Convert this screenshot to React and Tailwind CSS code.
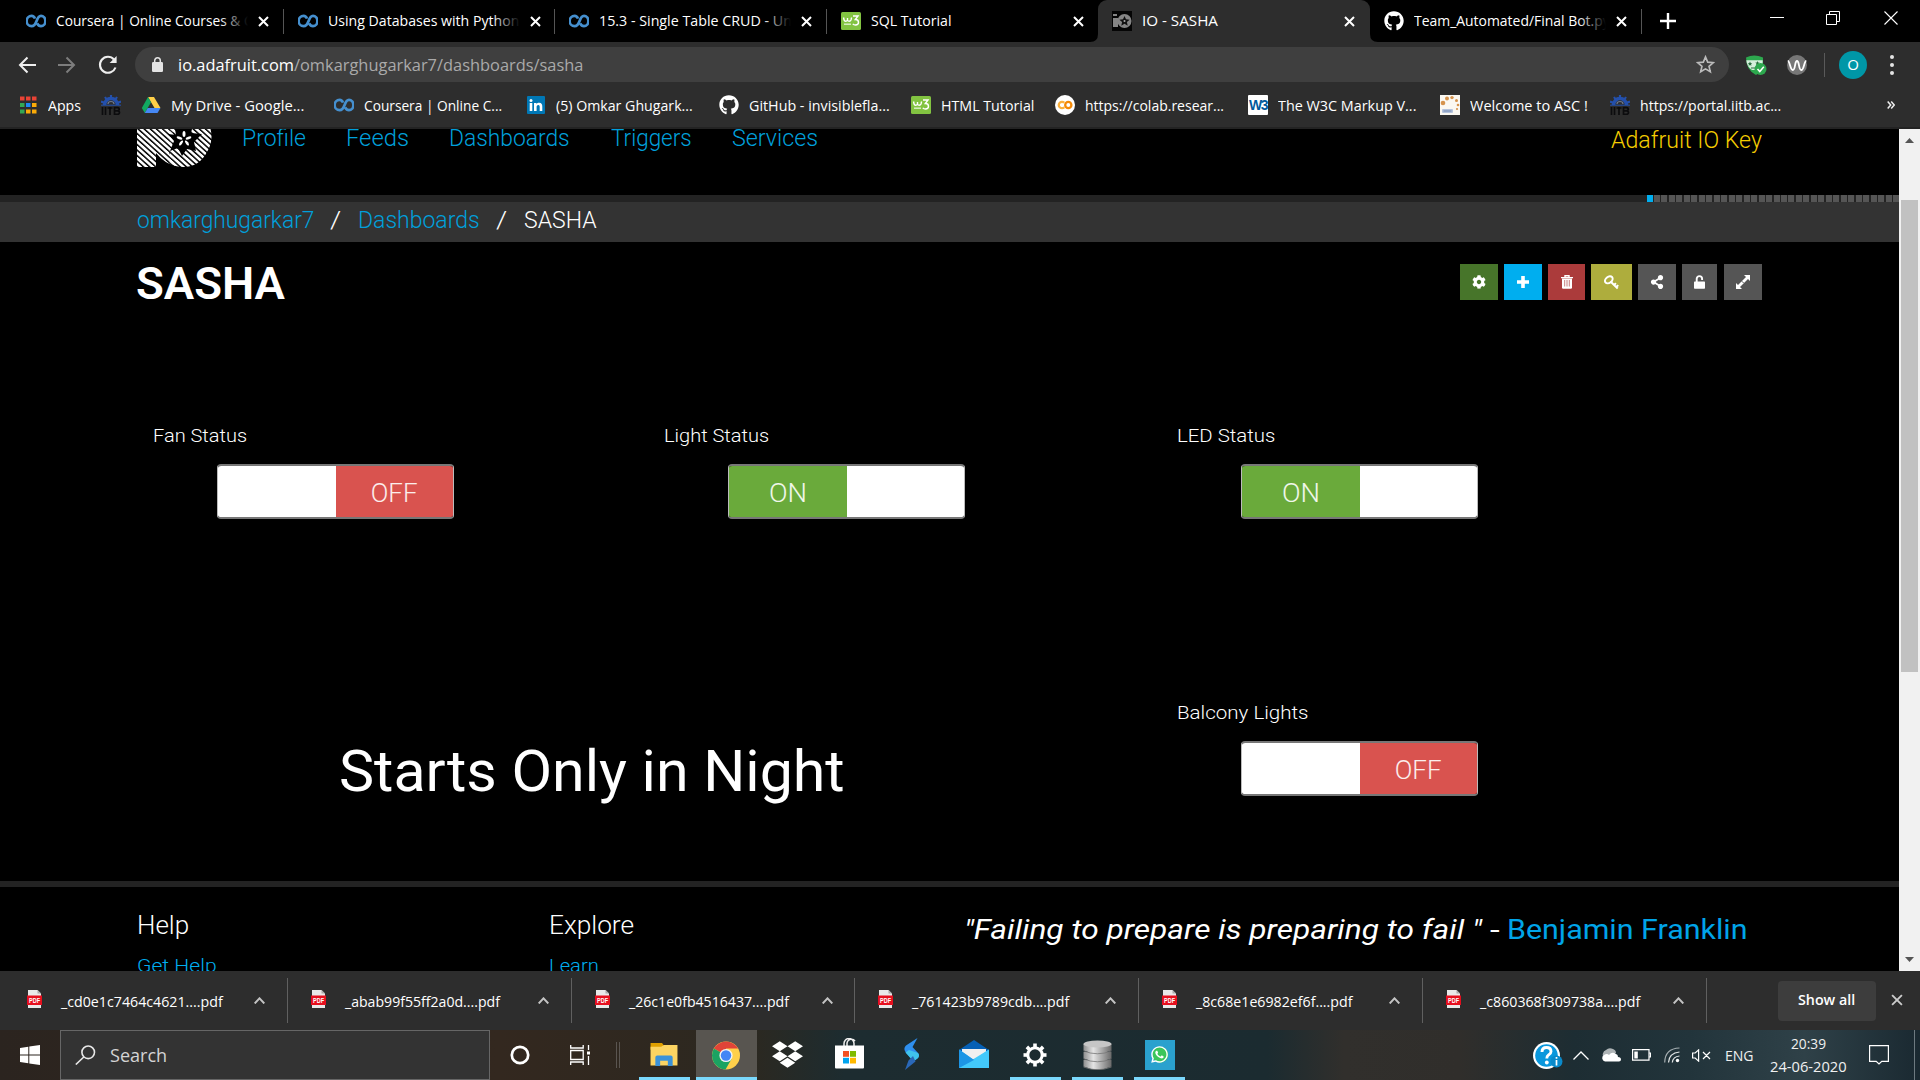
import React, { useLayoutEffect, useRef, useState } from "react";
import { FaGithub, FaDropbox, FaWhatsapp, FaCog, FaShareAlt } from "react-icons/fa";

const UI = "font-['Open_Sans','Noto_Sans',sans-serif]";
const PAGE = "font-['Roboto','Liberation_Sans',sans-serif]";

/* One line of text, stretched horizontally to the width w. */
function Fit({ w, className = "", children }) {
  const ref = useRef(null);
  const [s, setS] = useState(1);
  useLayoutEffect(() => {
    const measure = () => {
      if (ref.current && ref.current.offsetWidth) setS(w / ref.current.offsetWidth);
    };
    measure();
    if (document.fonts) document.fonts.ready.then(measure);
  }, [w]);
  return (
    <span className={"block shrink-0 whitespace-nowrap " + className} style={{ width: w }}>
      <span ref={ref} className="inline-block origin-left" style={{ transform: `scaleX(${s})` }}>{children}</span>
    </span>
  );
}

const Coursera = () => (
  <svg width="20" height="14" viewBox="0 0 20 14" fill="none" stroke="#458fce" strokeWidth="2.700">
    <path d="M9 4.600C8.300 2.700 7 1.800 5.600 1.800a5 5.200 0 0 0 0 10.400c3 0 4-2.200 5-5.200s2-5.200 4.400-5.200a4.400 5.200 0 0 1 0 10.400c-1.700 0-3-1-3.900-2.800" />
  </svg>
);
const W3Green = () => (
  <svg width="20" height="18" viewBox="0 0 20 18">
    <rect width="20" height="18" rx="1.500" fill="#82c341" />
    <path d="M2.500 5.500l.6 2.500q.3 1.200 1.500 1.200T6.500 8V6M6.500 8q.2 1.200 1.600 1.200T10 8l.6-2.500M12 4h5l-2.700 3.500q3.200 0 3.200 2.700T14.500 13q-1.800 0-2.700-1.200" fill="none" stroke="#fff" strokeWidth="1.400" />
    <path d="M3 12.200h7" stroke="#d9efc3" strokeWidth="1.500" />
  </svg>
);
const Iitb = () => (
  <svg width="20" height="20" viewBox="0 0 20 20">
    <path d="M3.500 10a6.500 6.500 0 0 1 13 0" fill="none" stroke="#2450ac" strokeWidth="3.600" />
    <path d="M10 0v4M4 2l2 3M16 2l-2 3M0 6.500l4 1.500M20 6.500L16 8" stroke="#2450ac" strokeWidth="2.200" />
    <path d="M0 10.200h20" stroke="#2450ac" strokeWidth="1" />
    <path d="M7 9a3 2.500 0 0 1 6 0" fill="none" stroke="#6b7890" strokeWidth="1.200" />
    <path d="M1.500 12v8M4.500 12v8M6.500 13h5M9 12v8M13.500 12.700v6.600h3q2 0 2-1.700t-2-1.700h-3 3q1.700 0 1.700-1.600t-1.700-1.600z" fill="none" stroke="#0c0c0e" strokeWidth="1.700" />
  </svg>
);
const Drive = () => (
  <svg width="20" height="18" viewBox="0 0 20 18">
    <path d="M7 1h6l6.500 11h-6z" fill="#ffcf48" />
    <path d="M7 1l3 5.200L3.800 17 .8 12z" fill="#11a861" />
    <path d="M6.700 12h12.800l-3 5H3.800z" fill="#4688f4" />
  </svg>
);
const LinkedIn = () => (
  <svg width="20" height="18" viewBox="0 0 20 18">
    <rect x="1" width="18" height="18" rx="1" fill="#0077b5" />
    <path d="M3.700 7h2.600v8H3.700zM8 7h2.500v1.200C11 7.300 12 6.800 13.200 6.800c2.500 0 3.100 1.700 3.100 3.900V15h-2.600v-3.900c0-1-.1-2-1.400-2-1.300 0-1.700 1-1.700 2V15H8z" fill="#fff" />
    <circle cx="5" cy="4.500" r="1.500" fill="#fff" />
  </svg>
);
const Github = () => (
  <span className="flex size-5 items-center justify-center text-white"><FaGithub size={20} /></span>
);
const Colab = () => (
  <svg width="20" height="20" viewBox="0 0 20 20">
    <circle cx="10" cy="10" r="10" fill="#fff" />
    <g fill="none" strokeWidth="2.300">
      <path d="M9.300 7.800A3.200 3.200 0 1 0 9.300 12.200" stroke="#fbb03b" />
      <circle cx="13.300" cy="10" r="3.100" stroke="#f58a07" />
    </g>
  </svg>
);
const W3C = () => (
  <span className="flex h-5 w-5 items-center justify-center rounded-[1px] bg-white font-['Liberation_Sans',sans-serif] text-[14px] font-bold tracking-[-1.5px] text-[#005a9c]">W3</span>
);
const Asc = () => (
  <svg width="20" height="20" viewBox="0 0 20 20">
    <rect width="20" height="20" fill="#fbf8f1" />
    <g fill="#d6934c">
      <circle cx="3" cy="8" r="2.300" /><circle cx="7" cy="3.500" r="2" /><circle cx="12" cy="2.600" r="1.700" />
      <circle cx="16.500" cy="5.500" r="1.500" /><circle cx="18" cy="10" r="1.300" /><circle cx="17" cy="14" r="1.100" />
    </g>
    <rect x="2" y="14" width="11" height="4" rx="1" fill="#b6c4dc" />
    <path d="M3.500 16h8" stroke="#6f86b2" />
  </svg>
);
const IoFav = () => (
  <svg width="20" height="20" viewBox="0 0 20 20">
    <rect width="20" height="20" fill="#050505" />
    <path d="M1 3h4v2H1zM1 7h5v9H1z" fill="#858585" />
    <circle cx="12.500" cy="10" r="7" fill="#858585" />
    <path d="M12.500 5l1.500 3.300 3.600.4-2.700 2.400.8 3.600-3.200-1.900-3.200 1.900.8-3.600-2.700-2.400 3.600-.4z" fill="#111" />
    <circle cx="12.500" cy="10" r="1" fill="#aaa" />
  </svg>
);
const AppsIcon = () => (
  <svg width="20" height="18" viewBox="0 0 20 18">
    {["#ea4335", "#ea4335", "#ea4335", "#34a853", "#1e88f5", "#fbab08", "#34a853", "#fbab08", "#fbab08"].map((c, i) => (
      <rect key={i} x={2 + (i % 3) * 6} y={Math.floor(i / 3) * 6.500 + 0.5} width="4.500" height="4" fill={c} />
    ))}
  </svg>
);
const Cross = ({ size = 11, color = "#fff", sw = 2 }) => (
  <svg width={size} height={size} viewBox="0 0 11 11"><path d="M1 1l9 9M10 1l-9 9" stroke={color} strokeWidth={sw} /></svg>
);

const tabs = [
  { icon: <Coursera />, text: "Coursera | Online Courses & C", w: 197, sep: true },
  { icon: <Coursera />, text: "Using Databases with Python", w: 191, sep: true },
  { icon: <Coursera />, text: "15.3 - Single Table CRUD - Un", w: 193, sep: true },
  { icon: <W3Green />, text: "SQL Tutorial", w: 81 },
  { icon: <IoFav />, text: "IO - SASHA", w: 76, active: true },
  { icon: <Github />, text: "Team_Automated/Final Bot.py", w: 196, sep: true },
];

function Tab({ t }) {
  return (
    <div className={"relative flex h-[42px] w-[271.6px] shrink-0 items-center pl-[14px] " + (t.active ? "z-10 rounded-t-[9px] bg-[#2d2d2d]" : "")}>
      {t.active && (
        <>
          <svg className="absolute -left-2 bottom-0" width="8" height="8"><path d="M8 0v8H0q8 0 8-8" fill="#2d2d2d" /></svg>
          <svg className="absolute -right-2 bottom-0" width="8" height="8"><path d="M0 0v8h8q-8 0-8-8" fill="#2d2d2d" /></svg>
        </>
      )}
      <span className="flex w-5 justify-center">{t.icon}</span>
      <div className="relative -mt-[2px] ml-[10px] h-6 w-[192px] overflow-hidden">
        <Fit w={t.w} className="text-[15px] leading-[24px] text-white">{t.text}</Fit>
        {t.w > 185 && <div className="absolute top-0 right-0 h-6 w-7 bg-gradient-to-r from-transparent to-black" />}
      </div>
      <span className="ml-[10px]"><Cross /></span>
      {t.sep && <span className="absolute right-0 top-[9px] h-[25px] w-px bg-[#555]" />}
    </div>
  );
}

const bookmarks = [
  { icon: <AppsIcon />, text: "Apps", w: 33, slot: "w-[83px]" },
  { icon: <Iitb />, slot: "w-[40px]" },
  { icon: <Drive />, text: "My Drive - Google...", w: 133, slot: "w-[193px]" },
  { icon: <Coursera />, text: "Coursera | Online C...", w: 138, slot: "w-[192px]" },
  { icon: <LinkedIn />, text: "(5) Omkar Ghugark...", w: 137, slot: "w-[193px]" },
  { icon: <Github />, text: "GitHub - invisiblefla...", w: 141, slot: "w-[192px]" },
  { icon: <W3Green />, text: "HTML Tutorial", w: 93, slot: "w-[144px]" },
  { icon: <Colab />, text: "https://colab.resear...", w: 139, slot: "w-[193px]" },
  { icon: <W3C />, text: "The W3C Markup V...", w: 138, slot: "w-[192px]" },
  { icon: <Asc />, text: "Welcome to ASC !", w: 118, slot: "w-[170px]" },
  { icon: <Iitb />, text: "https://portal.iitb.ac...", w: 141, slot: "w-[200px]" },
];

function BrowserChrome() {
  return (
    <header className={UI}>
      <div className="flex h-[42px] items-center bg-black pl-[12px]">
        {tabs.map((t) => <Tab key={t.text} t={t} />)}
        <svg className="ml-[18px]" width="16" height="16" viewBox="0 0 16 16"><path d="M8 0v16M0 8h16" stroke="#fff" strokeWidth="2.400" /></svg>
        <div className="ml-auto flex h-full items-start pt-[11px] pr-[22px]">
          <svg width="14" height="14"><path d="M0 6.500h14" stroke="#fff" /></svg>
          <svg className="ml-[42px]" width="14" height="14" fill="none" stroke="#fff"><path d="M.5 3.500h10v10H.5zM3.500 3.500v-3h10v10h-3" /></svg>
          <svg className="ml-[44px]" width="14" height="14"><path d="M.5.500l13 13M13.500.500l-13 13" stroke="#fff" strokeWidth="1.100" /></svg>
        </div>
      </div>
      <div className="flex h-[45px] items-center bg-[#2d2d2d] pl-[18px]">
        <svg width="18" height="18" fill="none" stroke="#eee" strokeWidth="2"><path d="M18 9H2M9.500 1.500L2 9l7.500 7.500" /></svg>
        <svg className="ml-[22px]" width="18" height="18" fill="none" stroke="#7d7d7d" strokeWidth="2"><path d="M0 9h16M8.500 1.500L16 9l-7.500 7.500" /></svg>
        <svg className="ml-[22px]" width="20" height="20" viewBox="0 0 20 20" fill="none" stroke="#eee" strokeWidth="2.100"><path d="M17.500 12.500A8 8 0 1 1 16 4.500" /><path d="M18.600 1v7h-7z" fill="#eee" stroke="none" /></svg>
        <div className="ml-[17px] flex h-[35px] w-[1594px] items-center rounded-full bg-[#3f3f3f] pr-[14px] pl-[17px]">
          <svg width="11" height="15" viewBox="0 0 11 15"><rect y="5" width="11" height="10" rx="1.200" fill="#e4e4e4" /><path d="M2.700 6V3.600a2.800 2.800 0 0 1 5.600 0V6" fill="none" stroke="#e4e4e4" strokeWidth="1.500" /></svg>
          <Fit w={405} className="ml-[15px] text-[17px] text-[#aaa]"><span className="text-white">io.adafruit.com</span>/omkarghugarkar7/dashboards/sasha</Fit>
          <svg className="ml-auto" width="19" height="19" viewBox="0 0 20 20"><path d="M10 2l2.300 5.500 6 .5-4.600 3.900 1.400 5.800L10 14.600l-5.100 3.100 1.400-5.800L1.700 8l6-.5z" fill="none" stroke="#bbb" strokeWidth="1.700" /></svg>
        </div>
        <svg className="ml-[17px]" width="21" height="20" viewBox="0 0 21 20">
          <path d="M0 2.500Q8-1.500 17 2.500V9q0 7-7 11Q0 15 0 2.500z" fill="#2da84e" />
          <path d="M.3 5.200h16.400q0 5-2 7L10 15H6Q1 12 .3 5.200z" fill="#d5efdc" />
          <path d="M4 6.500l.7 1.400 1.500.2-1.100 1 .3 1.600L4 10l-1.400.7.3-1.600-1.100-1 1.500-.2zM11.500 6l.7 1.400 1.500.2-1.100 1 .3 1.600-1.400-.7-1.400.7.3-1.600-1.100-1 1.500-.2zM5 12.500h4v1H5z" fill="#2a6f3e" />
          <circle cx="14.500" cy="14" r="6" fill="#2da84e" />
          <path d="M11.500 14l2.300 2.500 4-4.800" fill="none" stroke="#fff" strokeWidth="1.500" />
        </svg>
        <svg className="ml-[20px]" width="20" height="20" viewBox="0 0 20 20">
          <circle cx="10" cy="10" r="10" fill="#777" />
          <path d="M.8 6C3 6 3 15 5.800 15S7.500 6 10 6s1.500 9 4.300 9S17 6 19.300 6" fill="none" stroke="#fff" strokeWidth="1.800" />
        </svg>
        <span className="ml-[17px] h-[24px] w-px bg-[#5a5a5a]" />
        <span className="ml-[14px] flex size-7 items-center justify-center rounded-full bg-[#0097a7] text-[15px] text-white">O</span>
        <span className="ml-[23px] flex flex-col gap-1">
          {[0, 1, 2].map((i) => <span key={i} className="size-1 rounded-full bg-[#e4e4e4]" />)}
        </span>
      </div>
      <div className="flex h-[42px] items-center border-b-2 border-[#232323] bg-[#2d2d2d] pb-[4px] pl-[18px]">
        {bookmarks.map((b, i) => (
          <div key={i} className={"flex shrink-0 items-center " + b.slot}>
            <span className="flex w-5 shrink-0 justify-center">{b.icon}</span>
            {b.text && <Fit w={b.w} className="-mt-px ml-[10px] text-[15px] leading-[20px] text-white">{b.text}</Fit>}
          </div>
        ))}
        <svg className="ml-auto mr-[25px]" width="8" height="8" fill="none" stroke="#eee" strokeWidth="1.500"><path d="M.7.500L3.700 4 .7 7.500M4.200.500L7.200 4 4.200 7.500" /></svg>
      </div>
    </header>
  );
}

function IoLogo() {
  return (
    <svg width="75" height="38" viewBox="0 0 75 38" className="shrink-0">
      <defs>
        <pattern id="stripes" width="4.100" height="4.100" patternUnits="userSpaceOnUse" patternTransform="rotate(42)">
          <rect width="4.100" height="2.600" fill="#fff" />
        </pattern>
      </defs>
      <path d="M0 0h36v12l-4 12L39 37Q28 35 19 24V38H0z" fill="url(#stripes)" />
      <path d="M33 0h40.500q3 12-3 22-8 16-24 16-9 0-14-4z" fill="url(#stripes)" />
      <path d="M38 0h17l-1 4 11 1-8 8 2 9-9-2-5 7-4-8-8 3 4-10-6-7 8 1z" fill="#000" />
      <g fill="#fff">
        <ellipse cx="47" cy="5" rx="1.500" ry="3" /><ellipse cx="51.500" cy="9" rx="3" ry="1.300" transform="rotate(-18 51.500 9)" />
        <ellipse cx="50" cy="14" rx="1.300" ry="3" transform="rotate(-36 50 14)" /><ellipse cx="44" cy="14" rx="1.300" ry="3" transform="rotate(36 44 14)" />
        <ellipse cx="42.500" cy="9" rx="3" ry="1.300" transform="rotate(18 42.500 9)" />
      </g>
    </svg>
  );
}

const PlusIcon = () => (
  <svg width="12" height="12"><path d="M6 0v12M0 6h12" stroke="#fff" strokeWidth="3.600" /></svg>
);
const TrashIcon = () => (
  <svg width="12" height="14" viewBox="0 0 12 14"><path d="M4 2V.7h4V2M0 2.600h12" fill="none" stroke="#fff" strokeWidth="1.400" /><path d="M1 3.500h10V12.500q0 1.200-1.200 1.200H2.200Q1 13.700 1 12.500z" fill="#fff" /><path d="M3.700 5v6.500M6 5v6.500M8.300 5v6.500" stroke="#c77e7e" /></svg>
);
const KeyIcon = () => (
  <svg width="15" height="15" viewBox="0 0 15 15" fill="none" stroke="#fff"><ellipse cx="4.800" cy="4.800" rx="4.200" ry="3" transform="rotate(-38 4.800 4.800)" strokeWidth="2" /><path d="M6.500 6.500l7.200 7M10.200 10l1.700-1.900M12.300 12l1.900-1.900" strokeWidth="2" /></svg>
);
const UnlockIcon = () => (
  <svg width="11" height="14" viewBox="0 0 11 14"><rect y="6.500" width="11" height="7.300" rx=".7" fill="#fff" /><path d="M2.700 7V3.800a2.700 2.700 0 0 1 5.400 0V5" fill="none" stroke="#fff" strokeWidth="1.900" /></svg>
);
const ExpandIcon = () => (
  <svg width="14" height="14" viewBox="0 0 14 14"><path d="M8 0h6v6l-2-2-8 8 2 2H0V8l2 2 8-8z" fill="#fff" /><path d="M5.800 6.200l2 2" stroke="#555" /></svg>
);
const actions = [
  { cls: "w-[38px] bg-[#47752a]", icon: <FaCog size={14} /> },
  { cls: "w-[38px] bg-[#00aeef]", icon: <PlusIcon /> },
  { cls: "w-[37px] bg-[#ab3b3b]", icon: <TrashIcon /> },
  { cls: "w-[41px] bg-[#aead3d]", icon: <KeyIcon /> },
  { cls: "w-[38px] bg-[#555]", icon: <FaShareAlt size={14} /> },
  { cls: "w-[35px] bg-[#555]", icon: <UnlockIcon /> },
  { cls: "ml-px w-[38px] bg-[#555]", icon: <ExpandIcon /> },
];

function Switch({ label, w, on }) {
  const half = "flex w-1/2 items-center justify-center pt-[3px] text-[26px] font-light text-white/90";
  return (
    <div className="w-[512px]">
      <Fit w={w} className="text-[18.500px] leading-[24px] font-[350] text-white">{label}</Fit>
      <div className="mt-[16px] ml-[64px] flex h-[55px] w-[237px] overflow-hidden rounded-[4px] border border-t-2 border-[#bbb] border-t-[#777] border-b-2 border-b-[#777]">
        {on ? (
          <><div className={half + " bg-[#6aaa3b]"}><Fit w={38}>ON</Fit></div><div className="w-1/2 bg-white" /></>
        ) : (
          <><div className="w-1/2 bg-white" /><div className={half + " bg-[#d9534f]"}><Fit w={47}>OFF</Fit></div></>
        )}
      </div>
    </div>
  );
}

function Page() {
  return (
    <div className={"flex h-[842px] overflow-hidden bg-black " + PAGE}>
      <main className="h-full w-[1899px] shrink-0 overflow-hidden">
        <div className="flex h-[66px] items-start pr-[137px] pl-[137px]">
          <IoLogo />
          <nav className="ml-[30px] flex text-[23px] leading-[20px] font-light text-[#00a0dc]">
            <Fit w={64} className="mr-[40px]">Profile</Fit>
            <Fit w={63} className="mr-[40px]">Feeds</Fit>
            <Fit w={121} className="mr-[41px]">Dashboards</Fit>
            <Fit w={81} className="mr-[40px]">Triggers</Fit>
            <Fit w={86}>Services</Fit>
          </nav>
          <Fit w={151} className="ml-auto text-[23px] leading-[23px] font-light text-[#f5cd00]">Adafruit IO Key</Fit>
        </div>
        <div className="flex h-[7px] justify-end gap-[1.480px] bg-[#232323]">
          {Array.from({ length: 34 }, (_, i) => <span key={i} className={"h-full w-[6px] shrink-0 " + (i ? "bg-[#555]" : "bg-[#00aeef]")} />)}
        </div>
        <div className="flex h-[40px] bg-[#333] pl-[137px] text-[23px] leading-[38px] font-light text-[#00a0dc]">
          <Fit w={177}>omkarghugarkar7</Fit>
          <Fit w={11} className="ml-[16px] text-white">/</Fit>
          <Fit w={122} className="ml-[17px]">Dashboards</Fit>
          <Fit w={11} className="ml-[16px] text-white">/</Fit>
          <Fit w={73} className="ml-[17px] text-white">SASHA</Fit>
        </div>
        <div className="flex h-[180px] items-start pt-[22px] pr-[137px] pl-[136px]">
          <h1><Fit w={149} className="-mt-[6px] text-[44px] leading-[52px] font-semibold text-white">SASHA</Fit></h1>
          <div className="ml-auto flex gap-[6px] text-white">
            {actions.map((a, i) => <button key={i} className={"flex h-[36px] items-center justify-center " + a.cls}>{a.icon}</button>)}
          </div>
        </div>
        <div className="flex h-[277px] pt-[2px] pl-[153px]">
          <Switch label="Fan Status" w={94} />
          <div className="-ml-px"><Switch label="Light Status" w={105} on /></div>
          <div className="ml-px"><Switch label="LED Status" w={98} on /></div>
        </div>
        <div className="flex h-[182px] pt-[2px] pl-[339px]">
          <Fit w={506} className="mt-[35px] text-[58px] leading-[70px] font-[380] text-white">Starts Only in Night</Fit>
          <div className="ml-[332px]"><Switch label="Balcony Lights" w={131} /></div>
        </div>
        <footer className="flex h-[200px] border-t-[6px] border-[#232323] pl-[137px]">
          <div className="w-[412px] pt-[23px]">
            <Fit w={52} className="text-[25px] leading-[32px] font-light text-white">Help</Fit>
            <Fit w={80} className="mt-[12px] text-[19px] leading-[24px] font-light text-[#00aeef]">Get Help</Fit>
          </div>
          <div className="w-[415px] pt-[23px]">
            <Fit w={85} className="text-[25px] leading-[32px] font-light text-white">Explore</Fit>
            <Fit w={50} className="mt-[12px] text-[19px] leading-[24px] font-light text-[#00aeef]">Learn</Fit>
          </div>
          <div className="flex pt-[25px] text-[28px] leading-[36px] font-[380]">
            <Fit w={518} className="text-white italic">"Failing to prepare is preparing to fail "</Fit>
            <Fit w={10} className="ml-[8px] text-white">-</Fit>
            <Fit w={240} className="ml-[7px] text-[#00a4e8]">Benjamin Franklin</Fit>
          </div>
        </footer>
      </main>
      <aside className="flex w-[21px] flex-col items-center bg-[#f1f1f1]">
        <svg className="mt-[9px]" width="9" height="5"><path d="M0 5l4.500-5L9 5" fill="#555" /></svg>
        <div className="mt-[57px] h-[472px] w-[17px] bg-[#c1c1c1]" />
        <svg className="mt-auto mb-[9px]" width="9" height="5"><path d="M0 0l4.500 5L9 0" fill="#555" /></svg>
      </aside>
    </div>
  );
}

const files = [
  ["_cd0e1c7464c4621....pdf", 162], ["_abab99f55ff2a0d....pdf", 155], ["_26c1e0fb4516437....pdf", 160],
  ["_761423b9789cdb....pdf", 157], ["_8c68e1e6982ef6f....pdf", 156], ["_c860368f309738a....pdf", 160],
];

function Downloads() {
  return (
    <div className={"flex h-[59px] items-center bg-[#2d2d2d] pl-[4px] " + UI}>
      {files.map(([name, w]) => (
        <div key={name} className="flex h-[45px] w-[283.75px] shrink-0 items-center border-r border-[#606060] pl-[23px]">
          <svg className="-mt-[4px]" width="15" height="18" viewBox="0 0 15 18"><path d="M1 0h9.500L14 3.500V18H1z" fill="#e9e9e9" /><path d="M10.500 0v3.500H14" fill="#aaa" /><rect y="5.500" width="15" height="9.500" fill="#e60f1e" /><text x="7.500" y="12.900" fontSize="6.800" fontWeight="700" textAnchor="middle" fill="#fff" fontFamily="Liberation Sans" textLength="11" lengthAdjust="spacingAndGlyphs">PDF</text></svg>
          <span className="ml-[19px] block w-[193px] pt-px"><Fit w={w} className="text-[15px] leading-[22px] text-white">{name}</Fit></span>
          <svg width="11" height="7" fill="none" stroke="#c4c4c4" strokeWidth="1.900"><path d="M.7 6.500l4.800-5.200 4.800 5.200" /></svg>
        </div>
      ))}
      <div className="ml-[71px] flex h-[40px] w-[98px] items-center justify-center rounded-[4px] bg-[#3d3d3d] pb-[3px]">
        <Fit w={57} className="text-[15px] leading-[20px] font-semibold text-white">Show all</Fit>
      </div>
      <span className="-mt-[2px] ml-[15px]"><Cross size={12} color="#ccc" sw={1.7} /></span>
    </div>
  );
}

function TaskSlot({ cls, open, children }) {
  return (
    <div className={"flex h-full shrink-0 flex-col " + cls}>
      <div className="flex flex-1 items-center justify-center pt-[3px]">{children}</div>
      <div className={"h-[3px] " + (open ? "bg-[#7ad8fc]" : "")} />
    </div>
  );
}

function Taskbar() {
  return (
    <div className={"flex h-[50px] items-center bg-linear-[90deg,#2b241f_0%,#33281f_26%,#2c2820_39%,#1d2c30_44%,#1b2b30_66%,#312f2c_70%,#302e2b_76%,#1d2d33_82%,#22343b_88%,#2f4148_94%,#1a2931_100%] " + UI}>
      <svg className="ml-[20px]" width="20" height="20" viewBox="0 0 20 20" fill="#fff"><path d="M0 3l8.300-1.300v7.800H0zM9.300 1.500L20 0v9.500H9.300zM0 10.500h8.300v7.800L0 17zM9.300 10.500H20V20L9.300 18.500z" /></svg>
      <div className="ml-[20px] flex h-full w-[430px] items-center border border-[#666] bg-[#333] pl-[14px]">
        <svg width="21" height="20" viewBox="0 0 21 20" fill="none" stroke="#e8e8e8" strokeWidth="1.600"><circle cx="13.200" cy="7.300" r="6.300" /><path d="M8.800 12L.8 19.500" /></svg>
        <Fit w={57} className="ml-[14px] text-[19px] text-[#d4d4d4]">Search</Fit>
      </div>
      <svg className="ml-[20px]" width="20" height="20"><circle cx="10" cy="10" r="8.200" fill="none" stroke="#fff" strokeWidth="2.700" /></svg>
      <svg className="ml-[40px]" width="21" height="20" viewBox="0 0 21 20" fill="none" stroke="#fff" strokeWidth="1.300"><path d="M.7 5.500h12.500v9H.7zM.7 0v3h12.500V0M.7 20v-3h12.500v3M18.500 0v5M18.500 11v9" /><path d="M17 6.500h3v3h-3z" fill="#fff" stroke="none" /></svg>
      <span className="ml-[25px] h-[26px] w-[4px] border-x border-[#5a5550]" />
      <TaskSlot cls="ml-[19px] w-[51px]" open>
        <svg className="-mt-px -ml-px" width="28" height="25" viewBox="0 0 28 26"><path d="M0 1h12l2 3v4H0z" fill="#e0a000" /><path d="M0 5h11l3-2h14v21.500H0z" fill="#fcd462" /><path d="M5 25V16q0-2 2-2h14q2 0 2 2v9h-5v-5.500h-8V25z" fill="#3b92d8" /></svg>
      </TaskSlot>
      <TaskSlot cls="ml-[6px] w-[61px] bg-[#585550]" open>
        <svg className="-mr-px -ml-[3px]" width="28" height="29" viewBox="0 0 28 28"><circle cx="14" cy="14" r="14" fill="#ffd04b" /><path d="M14 14L1.900 7A14 14 0 0 1 26.100 7H14z" fill="#e04438" /><path d="M1.900 7A14 14 0 0 0 13.500 28l6-10.500L14 14z" fill="#1ba362" /><circle cx="14" cy="14" r="6.600" fill="#f4f4f4" /><circle cx="14" cy="14" r="5.200" fill="#4387f5" /></svg>
      </TaskSlot>
      <TaskSlot cls="w-[62px]"><span className="-mt-[2px] -ml-px text-white"><FaDropbox size={31} /></span></TaskSlot>
      <TaskSlot cls="w-[62px]">
        <svg className="-mt-[3px] -ml-[2px]" width="29" height="31" viewBox="0 0 29 31"><path d="M9 9V5.500a5 5 0 0 1 10 0V9M12 8V5a4.500 4.500 0 0 1 8-2" fill="none" stroke="#eee" strokeWidth="1.500" /><path d="M0 7.500h29V29.500q0 1-1 1H1q-1 0-1-1z" fill="#fff" /><path d="M8 13h6v5.800H8z" fill="#f25022" /><path d="M15 13h6v5.800h-6z" fill="#7fba00" /><path d="M8 19.800h6v5.700H8z" fill="#00a4ef" /><path d="M15 19.800h6v5.700h-6z" fill="#ffb900" /></svg>
      </TaskSlot>
      <TaskSlot cls="w-[62px]">
        <svg className="-mt-[2px] -ml-px" width="17" height="32" viewBox="0 0 17 32"><path d="M14.500 0L3 7.500Q0 10.500 2.500 14l8 9.500L15 20q2-2.500 0-5L9.500 9z" fill="#2e8fee" /><path d="M6 12l9 3q2 2.500 0 5l-4.500 3.500-8-9z" fill="#3fc3ec" /><path d="M10 18L5.500 22.500 2 32l10.500-8.500z" fill="#2a68b8" /></svg>
      </TaskSlot>
      <TaskSlot cls="w-[62px]">
        <svg className="-mt-[2px]" width="30" height="28" viewBox="0 0 30 28"><path d="M0 10L15 0l15 10v3H0z" fill="#0560b6" /><path d="M3 9h24v10H3z" fill="#f0f0f0" /><path d="M0 9.500L15 20 30 9.500V28H0z" fill="#38b6f3" /><path d="M0 28L30 9.500V28z" fill="#43c9fb" /><path d="M0 9.500L15 20 0 28z" fill="#1d95e5" /></svg>
      </TaskSlot>
      <TaskSlot cls="ml-[5px] w-[51px]" open>
        <svg className="-mt-px -ml-px" width="26" height="26" viewBox="-13 -13 26 26"><circle r="7.200" fill="none" stroke="#fff" strokeWidth="3" />{[0, 45, 90, 135, 180, 225, 270, 315].map((a) => <path key={a} d="M-1.800 -11.500h3.600v4h-3.600z" fill="#fff" transform={`rotate(${a})`} />)}</svg>
      </TaskSlot>
      <TaskSlot cls="ml-[11px] w-[51px]" open>
        <svg className="-mt-px" width="29" height="30" viewBox="0 0 29 30">
          <defs><linearGradient id="disk"><stop stopColor="#8f8f8f" /><stop offset=".35" stopColor="#e4e4e4" /><stop offset="1" stopColor="#6a6a6a" /></linearGradient></defs>
          {[19, 11, 3].map((y) => <g key={y}><path d={`M.5 ${y + 1}v6.500q14 6 28 0v-6.500z`} fill="url(#disk)" /><path d={`M.5 ${y + 8}q14 5.500 28 0`} fill="none" stroke="#777" strokeWidth=".8" /></g>)}
          <ellipse cx="14.500" cy="4" rx="14" ry="3.500" fill="#c6c6c6" />
        </svg>
      </TaskSlot>
      <TaskSlot cls="ml-[11px] w-[51px]" open>
        <span className="-mt-px flex h-[30px] w-[30px] items-center justify-center bg-[#2aa1ce]"><svg className="absolute" width="18" height="18"><circle cx="9.300" cy="8.700" r="8" fill="#3bc659" /></svg><span className="relative text-white"><FaWhatsapp size={19} /></span></span>
      </TaskSlot>
      <div className="ml-auto flex h-full items-center text-[#f0f0f0]">
        <svg className="mt-[2px]" width="30" height="28" viewBox="0 0 30 28"><circle cx="13.500" cy="13.500" r="13.500" fill="#fff" /><circle cx="13.500" cy="13.500" r="11.300" fill="#0a97dc" /><path d="M9 10q0-4.500 4.500-4.500T18 9.500q0 2-2.500 3.500-1.700 1-1.700 3.500" fill="none" stroke="#fff" strokeWidth="2.900" /><circle cx="13.800" cy="20.500" r="1.900" fill="#fff" /><circle cx="23.500" cy="19.500" r="6" fill="#0a8acb" /><path d="M23.500 18v5.500M23.500 15v1.800" stroke="#fff" strokeWidth="1.700" /></svg>
        <svg className="ml-[10px]" width="16" height="9" fill="none" stroke="#fff" strokeWidth="1.300"><path d="M.5 8.500L8 1l7.500 7.500" /></svg>
        <svg className="ml-[12px]" width="20" height="14" viewBox="0 0 20 14"><path d="M3 10a5 5 0 0 1 2-8q3-3 7-1 3 1 3 4z" fill="#aeb4b6" /><path d="M4 13.500a3.500 3.500 0 0 1-1-6.500q3-2 5 0 3-4 7-1 2 .5 2 3 3 0 3 2.500 0 2-2 2z" fill="#fff" /></svg>
        <svg className="ml-[11px]" width="19" height="12" viewBox="0 0 19 12" fill="none" stroke="#fff" strokeWidth="1.200"><path d="M.6.600h16.400v10.500H.6zM17 4h1.500v4H17" /><path d="M2.300 2.500h3.500v7H2.300z" fill="#fff" stroke="none" /></svg>
        <svg className="ml-[13px]" width="16" height="16" viewBox="0 0 16 16" fill="none" stroke="#e0e4e5" strokeWidth="1.200"><path d="M.7 15.500Q1 1.500 15.500 1" opacity=".7" /><path d="M4.500 15.500Q5 6 15.500 5M8.300 15.500Q9 9.500 15.500 9" /><circle cx="13.500" cy="13.500" r="1.700" fill="#fff" stroke="none" /></svg>
        <svg className="ml-[12px]" width="19" height="13" viewBox="0 0 19 13" fill="none" stroke="#fff" strokeWidth="1.200"><path d="M.6 4h2.600L6.600.900v11.200L3.200 9H.6zM11 3l7 7M18 3l-7 7" /></svg>
        <Fit w={29} className="ml-[14px] text-[15px]">ENG</Fit>
        <div className="ml-[16px] flex h-full w-[77px] flex-col items-center pt-[2px] text-[14.500px] leading-[23px]">
          <Fit w={35}>20:39</Fit>
          <Fit w={77}>24-06-2020</Fit>
        </div>
        <svg className="ml-[22px]" width="20" height="20" viewBox="0 0 20 20" fill="none" stroke="#fff" strokeWidth="1.200"><path d="M.6.600h18.800v15.800h-6.600L10 19l-2.800-2.600H.6z" /></svg>
        <span className="mr-[5px] ml-[25px] h-full w-px bg-[#6d7a80]" />
      </div>
    </div>
  );
}

export default function App() {
  return (
    <div className="h-[1080px] w-[1920px] overflow-hidden bg-black">
      <BrowserChrome />
      <Page />
      <Downloads />
      <Taskbar />
    </div>
  );
}
